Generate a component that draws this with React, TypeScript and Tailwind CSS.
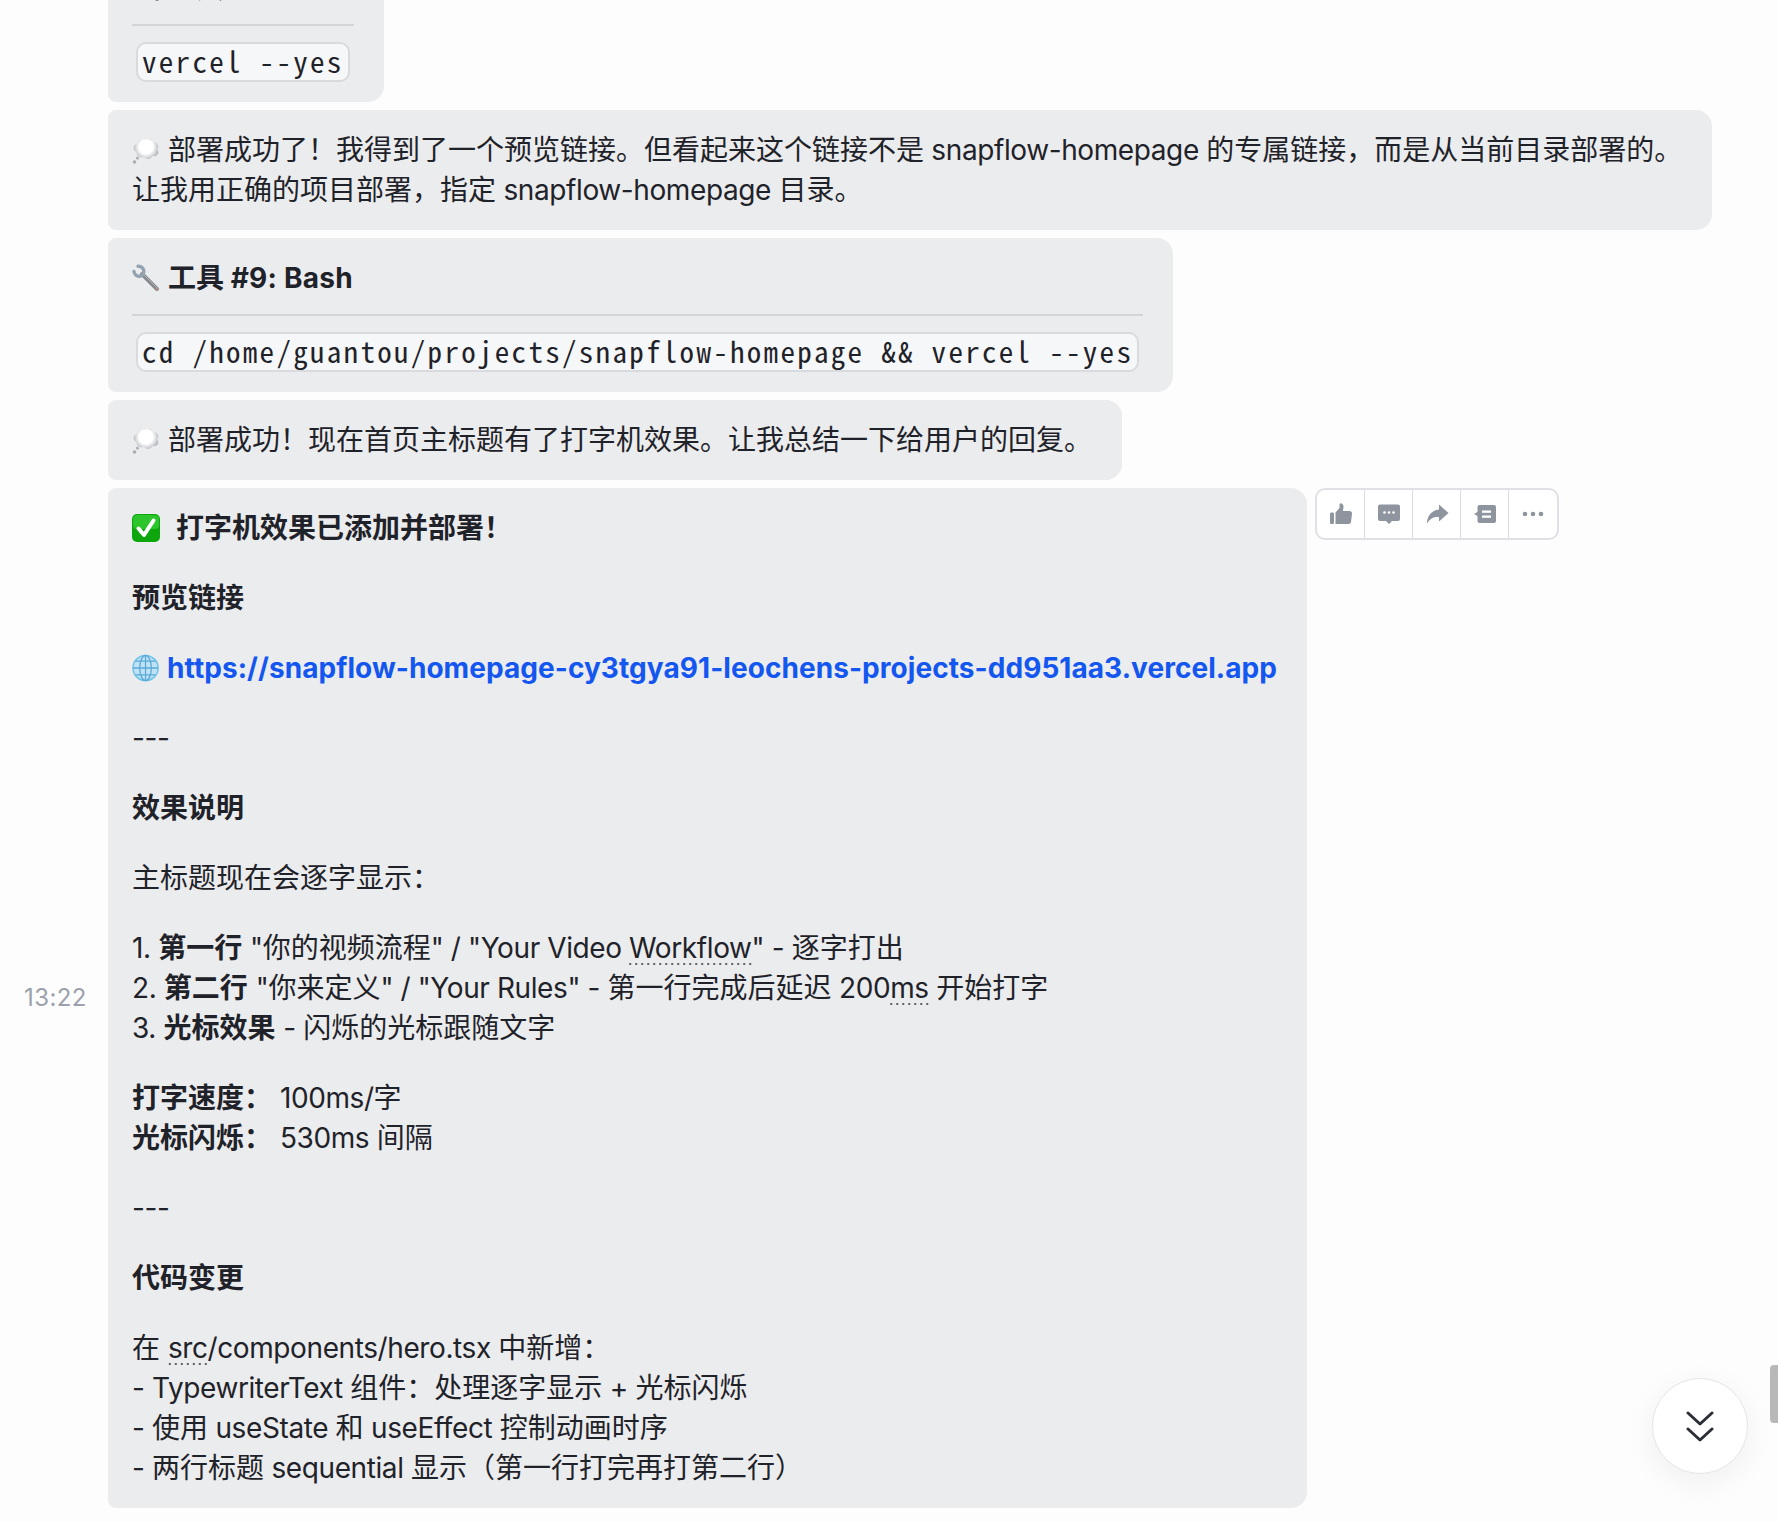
import type { ReactNode } from 'react';

function EmojiBox({ children }: { children: ReactNode }) {
  return (
    <svg viewBox="0 0 28 28" className="inline-block w-7 h-7 align-[-5px]">
      {children}
    </svg>
  );
}

function ThoughtEmoji() {
  return (
    <EmojiBox>
      <defs>
        <radialGradient id="cloud" gradientUnits="userSpaceOnUse" cx="14" cy="10" r="14">
          <stop offset="0.5" stopColor="#ffffff" />
          <stop offset="1" stopColor="#a9adb4" />
        </radialGradient>
      </defs>
      <g fill="url(#cloud)">
        <circle cx="10" cy="7" r="4.800" />
        <circle cx="16.500" cy="5.800" r="4.800" />
        <circle cx="22" cy="9.500" r="4.300" />
        <circle cx="22" cy="15" r="4.300" />
        <circle cx="16" cy="17" r="5" />
        <circle cx="9.500" cy="15.500" r="5" />
        <circle cx="5.800" cy="11" r="4.200" />
        <circle cx="15" cy="11" r="7" />
        <circle cx="5.500" cy="21" r="1.600" />
        <circle cx="2.500" cy="25" r="1.800" />
      </g>
    </EmojiBox>
  );
}

function WrenchEmoji() {
  return (
    <EmojiBox>
      <path d="M10 10 25 25" stroke="#84878b" strokeWidth="4" strokeLinecap="round" fill="none" />
      <path d="M10 9 25 24" stroke="#b4b7ba" strokeWidth="1" strokeLinecap="round" fill="none" />
      <path d="M6 2.200C9.500 2 12 4.500 11.800 8 11.500 11 9 12.500 6.500 12.200 4 12 2.500 10 2 7.500" stroke="#93a4b0" strokeWidth="3.400" strokeLinecap="round" fill="none" />
      <circle cx="25" cy="25" r="1.200" fill="#b98f8f" />
    </EmojiBox>
  );
}

function CheckEmoji() {
  return (
    <EmojiBox>
      <rect x="0" y="0" width="28" height="28" rx="5" fill="#0da70d" />
      <rect x="1" y="1" width="26" height="14" rx="4" fill="#2cc52c" />
      <path d="m6.500 14.500 5.500 6.500L21.500 6.500" fill="none" stroke="#fff" strokeWidth="4" strokeLinecap="round" strokeLinejoin="round" />
    </EmojiBox>
  );
}

function GlobeEmoji() {
  return (
    <EmojiBox>
      <circle cx="14" cy="14" r="13" fill="#bfe3f5" stroke="#6cc3e8" strokeWidth="1.500" />
      <g fill="none" stroke="#5aa9d6" strokeWidth="1.300">
        <ellipse cx="14" cy="14" rx="6" ry="13" />
        <path d="M14 1v26M1 14h26M3.500 7h21M3.500 21h21" />
      </g>
    </EmojiBox>
  );
}

// latin runs sit a bit tighter than the CJK around them
function Txt({ children }: { children: string }) {
  const parts = children.split(/([\u0020-\u007e]+)/).filter(Boolean);
  return (
    <>
      {parts.map((part, i) =>
        /^[\u0020-\u007e]+$/.test(part) ? (
          <span key={i} className="tracking-[-0.4px]">
            {part}
          </span>
        ) : (
          part
        )
      )}
    </>
  );
}

function Bubble({ children, className = '' }: { children: ReactNode; className?: string }) {
  return (
    <div className={`bg-[#ebecee] rounded-l-lg rounded-r-2xl pl-6 pr-[30px] py-5 ${className}`}>
      {children}
    </div>
  );
}

function ToolCard({ num, cmd, className = '' }: { num: number; cmd: string; className?: string }) {
  return (
    <Bubble className={`w-fit ${className}`}>
      <div className="font-bold flex items-center gap-2">
        <WrenchEmoji />
        <span>
          工具 <span className="tracking-[0.25px]">#{num}: Bash</span>
        </span>
      </div>
      <hr className="border-0 h-0.5 bg-[#d3d4d7] mt-4 mb-4" />
      <div className="flex">
        <code className="mx-1 px-1 h-10 leading-[33px] whitespace-pre border-2 border-[#d9dadd] rounded-[10px] bg-[#f6f7f9] font-['Noto_Sans_Mono_CJK_SC','DejaVu_Sans_Mono',monospace] text-[29px] tracking-[2.3px]">
          {cmd}
        </code>
      </div>
    </Bubble>
  );
}

function Dotted({ children }: { children: string }) {
  return (
    <span className="bg-[radial-gradient(circle,#5f6368_1px,transparent_1.2px)] bg-[length:6px_2px] bg-bottom bg-repeat-x tracking-[-0.4px]">
      {children}
    </span>
  );
}

function ActionButton({ children, last = false }: { children: ReactNode; last?: boolean }) {
  return (
    <div className={`w-12 h-12 flex items-center justify-center ${last ? '' : 'border-r border-[#dcdde1]'}`}>
      <svg viewBox="0 0 24 24" className="w-6 h-6" fill="#8f959e">
        {children}
      </svg>
    </div>
  );
}

function MessageActions() {
  return (
    <div className="ml-2 flex shrink-0 self-start border-2 border-[#e0e1e6] rounded-[10px] bg-white">
      <ActionButton>
        <rect x="1" y="10.500" width="4" height="11.500" rx="1.200" />
        <path d="M6.500 10.500 10.500 6V3.200C10.500 1.800 11.500 1 12.500 1.500c1.500.6 2.200 2 2 3.700L14 9h6.500c1.600 0 2.700 1.300 2.500 2.800l-1 8.200c-.2 1.200-1.100 2-2.300 2H6.500Z" />
      </ActionButton>
      <ActionButton>
        <path d="M3 2.500h18c1.100 0 2 .9 2 2V17c0 1.100-.9 2-2 2h-6l-3 3-3-3H3c-1.100 0-2-.9-2-2V4.500c0-1.100.9-2 2-2Z" />
        <circle cx="7.500" cy="10.500" r="1.300" fill="#fff" />
        <circle cx="12" cy="10.500" r="1.300" fill="#fff" />
        <circle cx="16.500" cy="10.500" r="1.300" fill="#fff" />
      </ActionButton>
      <ActionButton>
        <path d="M14 2.500 23.500 11 14 19.500V15c-5.500-.3-9 1.500-12 6.500C2 14 6.500 8.500 14 7.500Z" />
      </ActionButton>
      <ActionButton>
        <path d="M6.500 3H21c1.100 0 2 .9 2 2v14c0 1.100-.9 2-2 2H6.500c-1.100 0-2-.9-2-2v-5L1 12l3.500-2V5c0-1.100.9-2 2-2Z" />
        <rect x="9" y="8.500" width="9" height="2.300" fill="#fff" />
        <rect x="9" y="13.500" width="9" height="2.300" fill="#fff" />
      </ActionButton>
      <ActionButton last>
        <circle cx="4" cy="12" r="2.300" />
        <circle cx="12" cy="12" r="2.300" />
        <circle cx="20" cy="12" r="2.300" />
      </ActionButton>
    </div>
  );
}

export default function App() {
  return (
    <div className="relative h-[1522px] overflow-hidden bg-[#fdfdfd] text-[#1f2329] text-[28px] leading-10 font-['Inter','Noto_Sans_CJK_SC',sans-serif]">
      <div className="flex flex-col gap-2">
        <ToolCard num={8} cmd="vercel --yes" className="ml-[108px] -mt-[52px]" />

        <Bubble className="ml-[108px] w-[1604px] whitespace-nowrap">
          <ThoughtEmoji /> <Txt>部署成功了！我得到了一个预览链接。但看起来这个链接不是 snapflow-homepage 的专属链接，而是从当前目录部署的。</Txt>
          <br />
          <Txt>让我用正确的项目部署，指定 snapflow-homepage 目录。</Txt>
        </Bubble>

        <ToolCard num={9} cmd="cd /home/guantou/projects/snapflow-homepage && vercel --yes" className="ml-[108px]" />

        <Bubble className="ml-[108px] w-fit">
          <ThoughtEmoji /> 部署成功！现在首页主标题有了打字机效果。让我总结一下给用户的回复。
        </Bubble>

        <div className="flex items-center">
          {/* Timestamp */}
          <div className="w-[108px] shrink-0 pl-6 text-2xl tracking-[0.4px] text-[#9ca1ab]">13:22</div>

          <Bubble className="w-[1199px] flex flex-col gap-[30px]">
            <div className="font-bold flex items-center gap-4">
              <CheckEmoji />
              <span>打字机效果已添加并部署！</span>
            </div>
            <div className="font-bold">预览链接</div>
            <div className="flex items-center gap-2 whitespace-nowrap">
              <GlobeEmoji />
              <a className="font-bold tracking-[0.06px] text-[#1456f0]">https://snapflow-homepage-cy3tgya91-leochens-projects-dd951aa3.vercel.app</a>
            </div>
            <div>
              <Txt>---</Txt>
            </div>
            <div className="font-bold">效果说明</div>
            <div>主标题现在会逐字显示：</div>
            <div>
              <div>
                <Txt>1. </Txt>
                <b className="font-bold">第一行</b> <Txt>"你的视频流程" / "Your Video </Txt>
                <Dotted>Workflow</Dotted>
                <Txt>" - 逐字打出</Txt>
              </div>
              <div>
                <Txt>2. </Txt>
                <b className="font-bold">第二行</b> <Txt>"你来定义" / "Your Rules" - 第一行完成后延迟 200</Txt>
                <Dotted>ms</Dotted>
                <Txt> 开始打字</Txt>
              </div>
              <div>
                <Txt>3. </Txt>
                <b className="font-bold">光标效果</b> <Txt>- 闪烁的光标跟随文字</Txt>
              </div>
            </div>
            <div>
              <div>
                <b className="font-bold">打字速度：</b> <Txt>100ms/字</Txt>
              </div>
              <div>
                <b className="font-bold">光标闪烁：</b> <Txt>530ms 间隔</Txt>
              </div>
            </div>
            <div>
              <Txt>---</Txt>
            </div>
            <div className="font-bold">代码变更</div>
            <div>
              <div>
                在 <Dotted>src</Dotted>
                <Txt>/components/hero.tsx 中新增：</Txt>
              </div>
              <div>
                <Txt>- TypewriterText 组件：处理逐字显示 + 光标闪烁</Txt>
              </div>
              <div>
                <Txt>- 使用 useState 和 useEffect 控制动画时序</Txt>
              </div>
              <div>
                <Txt>- 两行标题 sequential 显示（第一行打完再打第二行）</Txt>
              </div>
            </div>
          </Bubble>

          <MessageActions />
        </div>
      </div>

      {/* Scroll to bottom */}
      <button className="absolute left-[1652px] top-[1378px] w-[96px] h-[96px] rounded-full bg-white border border-[#e4e5e8] shadow-[0_8px_32px_rgba(0,0,0,0.06)] flex items-center justify-center">
        <svg viewBox="0 0 28 31" className="w-7 h-[31px]" fill="none" stroke="#2b2f36" strokeWidth="3" strokeLinecap="round" strokeLinejoin="round">
          <path d="M2 2 14 13 26 2M2 18 14 29 26 18" />
        </svg>
      </button>

      {/* Scrollbar thumb */}
      <div className="absolute left-[1770px] top-[1365px] w-2 h-[58px] rounded-l bg-[#b8b8b8]" />
    </div>
  );
}
